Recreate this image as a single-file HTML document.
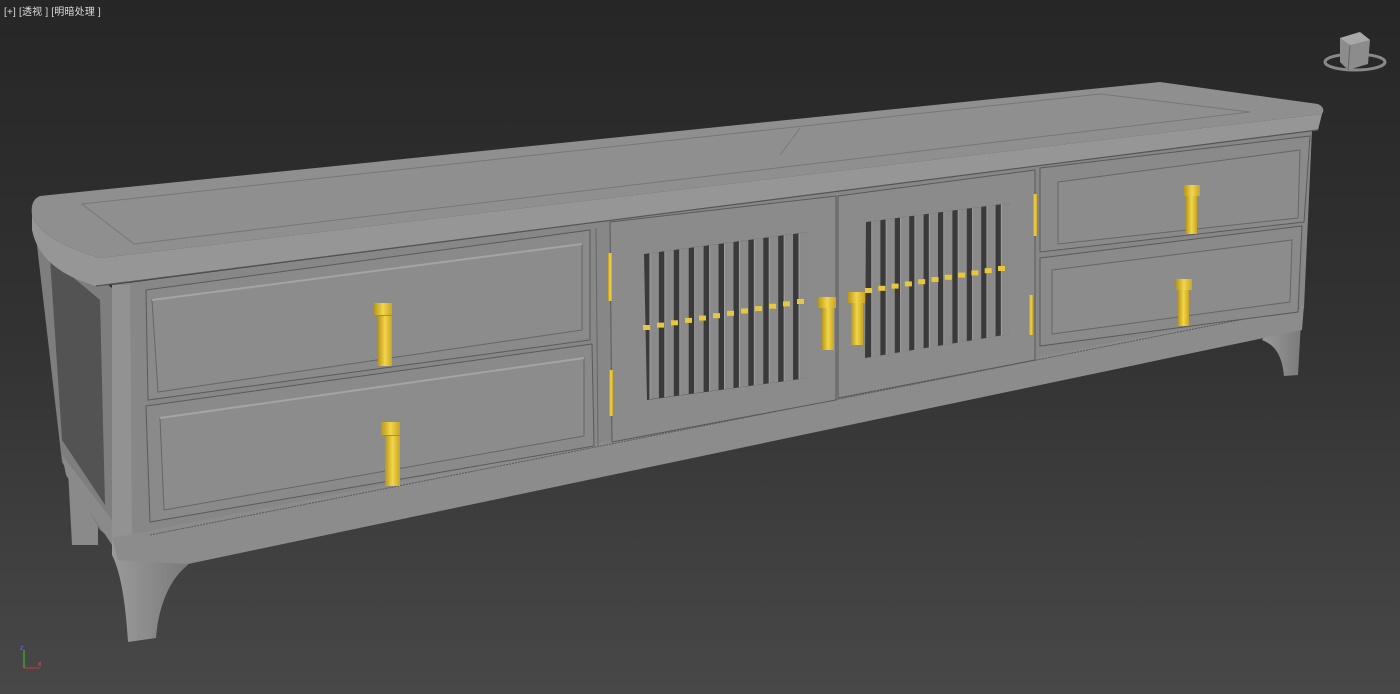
<!DOCTYPE html>
<html><head><meta charset="utf-8"><style>
html,body{margin:0;padding:0;width:1400px;height:694px;overflow:hidden;background:#333}
svg{display:block}
.t{position:absolute;left:4px;top:3px;font:10px "Liberation Sans","Noto Sans CJK SC",sans-serif;color:#ddd;letter-spacing:0.2px}
</style></head><body>
<div class="t">[+] [透视 ] [明暗处理 ]</div>
<svg id="s" width="1400" height="694" viewBox="0 0 1400 694" xmlns="http://www.w3.org/2000/svg">
<defs>
<linearGradient id="bg" x1="0" y1="0" x2="0" y2="1">
<stop offset="0" stop-color="#262626"/><stop offset="0.5" stop-color="#333"/><stop offset="1" stop-color="#484848"/></linearGradient>
<linearGradient id="gold" x1="0" y1="0" x2="1" y2="0">
<stop offset="0" stop-color="#b8961a"/><stop offset="0.5" stop-color="#f2d64a"/><stop offset="1" stop-color="#c9a424"/></linearGradient>
<linearGradient id="leg" x1="0" y1="0" x2="1" y2="0">
<stop offset="0" stop-color="#9a9a9a"/><stop offset="1" stop-color="#7a7a7a"/></linearGradient>
</defs>
<rect width="1400" height="694" fill="url(#bg)"/>
<!-- view cube -->
<ellipse cx="1355" cy="62" rx="30" ry="8" fill="none" stroke="#888" stroke-width="3"/>
<polygon points="1340,38 1360,32 1370,40 1368,64 1348,70 1340,62" fill="#8c8c8c"/>
<polygon points="1340,38 1360,32 1370,40 1350,45" fill="#a8a8a8"/>
<line x1="1350" y1="45" x2="1348" y2="70" stroke="#666"/>
<!-- axis -->
<line x1="24" y1="668" x2="24" y2="650" stroke="#3c3"/><line x1="24" y1="668" x2="40" y2="668" stroke="#c33"/>
<text x="20" y="650" font-size="7" fill="#66f" font-family="Liberation Sans">z</text>
<text x="38" y="666" font-size="7" fill="#d55" font-family="Liberation Sans">x</text>
<!-- back left leg -->
<polygon points="68,470 98,515 98,545 72,545" fill="#8a8a8a"/>
<!-- left side -->
<polygon points="35,228 112,288 112,540 100,530 62,462" fill="#7e7e7e"/>
<polygon points="50,258 100,300 105,505 62,440" fill="#535353"/>
<polygon points="62,455 112,520 112,545 66,475" fill="#8a8a8a"/>
<!-- right leg -->
<path d="M1272,325 L1302,305 L1298,375 L1284,376 C1282,355 1275,345 1262,340 Z" fill="url(#leg)"/>
<!-- left front leg -->
<path d="M112,540 L188,535 L188,565 C168,580 158,610 156,638 L128,642 C126,610 122,575 112,555 Z" fill="url(#leg)"/>
<!-- front body -->
<polygon points="112,285 1312,130 1304,308 112,540" fill="#878787"/>
<polygon points="112,285 130,285 132,538 112,540" fill="#929292"/>
<!-- base rail -->
<polygon points="112,538 1304,305 1302,330 188,564 118,560" fill="#8c8c8c"/>
<line x1="150" y1="535" x2="1300" y2="308" stroke="#5a5a5a" stroke-width="1" stroke-dasharray="2,1"/>
<!-- top slab -->
<path d="M40,196 L1160,82 L1318,104 Q1326,108 1322,114 L100,258 Q40,240 32,215 Q30,200 40,196 Z" fill="#8f8f8f"/>
<polygon points="82,204 1100,94 1250,112 134,244" fill="none" stroke="#777" stroke-width="1"/>
<line x1="800" y1="128" x2="780" y2="155" stroke="#7a7a7a"/>
<path d="M32,215 Q40,240 100,258 L1322,114 L1318,130 L96,286 Q40,270 32,230 Z" fill="#969696"/>
<line x1="96" y1="286" x2="1318" y2="130" stroke="#555" stroke-width="1.2"/>
<!-- left drawers -->
<polygon points="146,290 590,230 590,340 148,400" fill="#8a8a8a" stroke="#5a5a5a"/>
<polygon points="152,300 582,244 582,330 158,392" fill="#8c8c8c" stroke="#666"/>
<line x1="152" y1="300" x2="582" y2="244" stroke="#a4a4a4" stroke-width="2"/>
<polygon points="146,406 592,344 594,446 150,522" fill="#8a8a8a" stroke="#5a5a5a"/>
<polygon points="160,418 584,358 584,436 164,510" fill="#8c8c8c" stroke="#666"/>
<line x1="160" y1="418" x2="584" y2="358" stroke="#a4a4a4" stroke-width="2"/>
<!-- center post -->
<line x1="596" y1="228" x2="598" y2="446" stroke="#666"/>
<!-- left door -->
<polygon points="610,222 836,196 836,400 612,442" fill="#8b8b8b" stroke="#5a5a5a"/>
<polygon points="644,254 808,232 808,378 647,400" fill="#3a3a3a"/>
<!-- right door -->
<polygon points="838,196 1035,170 1035,360 838,398" fill="#8b8b8b" stroke="#5a5a5a"/>
<polygon points="866,222 1010,203 1010,334 865,358" fill="#3a3a3a"/>
<g id="slats"></g>
<!-- right drawers -->
<polygon points="1040,168 1310,136 1304,222 1040,252" fill="#8a8a8a" stroke="#5a5a5a"/>
<polygon points="1058,182 1300,150 1298,218 1058,244" fill="#8c8c8c" stroke="#666"/>
<polygon points="1040,258 1302,226 1298,312 1040,346" fill="#8a8a8a" stroke="#5a5a5a"/>
<polygon points="1052,270 1292,240 1290,302 1052,334" fill="#8c8c8c" stroke="#666"/>
<!-- hinges -->
<rect x="608" y="253" width="4" height="48" fill="url(#gold)"/>
<rect x="609" y="370" width="4" height="46" fill="url(#gold)"/>
<rect x="1033" y="194" width="4" height="42" fill="url(#gold)"/>
<rect x="1029" y="295" width="4" height="40" fill="url(#gold)"/>
<!-- handles -->
<g fill="url(#gold)">
<rect x="374" y="303" width="18" height="12"/><rect x="378" y="316" width="14" height="50"/>
<rect x="381" y="422" width="19" height="13"/><rect x="385" y="436" width="15" height="50"/>
<rect x="818" y="297" width="18" height="11"/><rect x="822" y="308" width="12" height="42"/>
<rect x="848" y="292" width="17" height="11"/><rect x="851" y="303" width="12" height="42"/>
<rect x="1184" y="185" width="16" height="11"/><rect x="1186" y="196" width="11" height="38"/>
<rect x="1176" y="279" width="16" height="11"/><rect x="1178" y="290" width="11" height="36"/>
</g>
</svg>
<script>
var g=document.getElementById('slats'),h='';
function door(x0,x1,t0,t1,b0,b1,n,dx0,dy0,dx1,dy1){
 var w=(x1-x0)/n;
 for(var i=0;i<n;i++){var a=x0+i*w+w*0.4,b=x0+i*w+w;
  var f=function(x,p,q){return p+(q-p)*(x-x0)/(x1-x0)};
  h+='<polygon points="'+a+','+f(a,t0,t1)+' '+b+','+f(b,t0,t1)+' '+b+','+f(b,b0,b1)+' '+a+','+f(a,b0,b1)+'" fill="#8a8a8a"/>';
  h+='<line x1="'+a+'" y1="'+f(a,t0,t1)+'" x2="'+a+'" y2="'+f(a,b0,b1)+'" stroke="#a0a0a0"/>';}
 for(var i=0;i<=n;i++){var x=dx0+(dx1-dx0)*i/n,y=dy0+(dy1-dy0)*i/n;
  h+='<rect x="'+(x-3)+'" y="'+(y-2)+'" width="7" height="5" fill="#e8c83a"/>';}
}
door(644,808,254,232,400,378,11,646,327,800,301);
door(866,1010,222,203,358,334,10,868,290,1001,268);
g.innerHTML=h;
</script>
</body></html>
